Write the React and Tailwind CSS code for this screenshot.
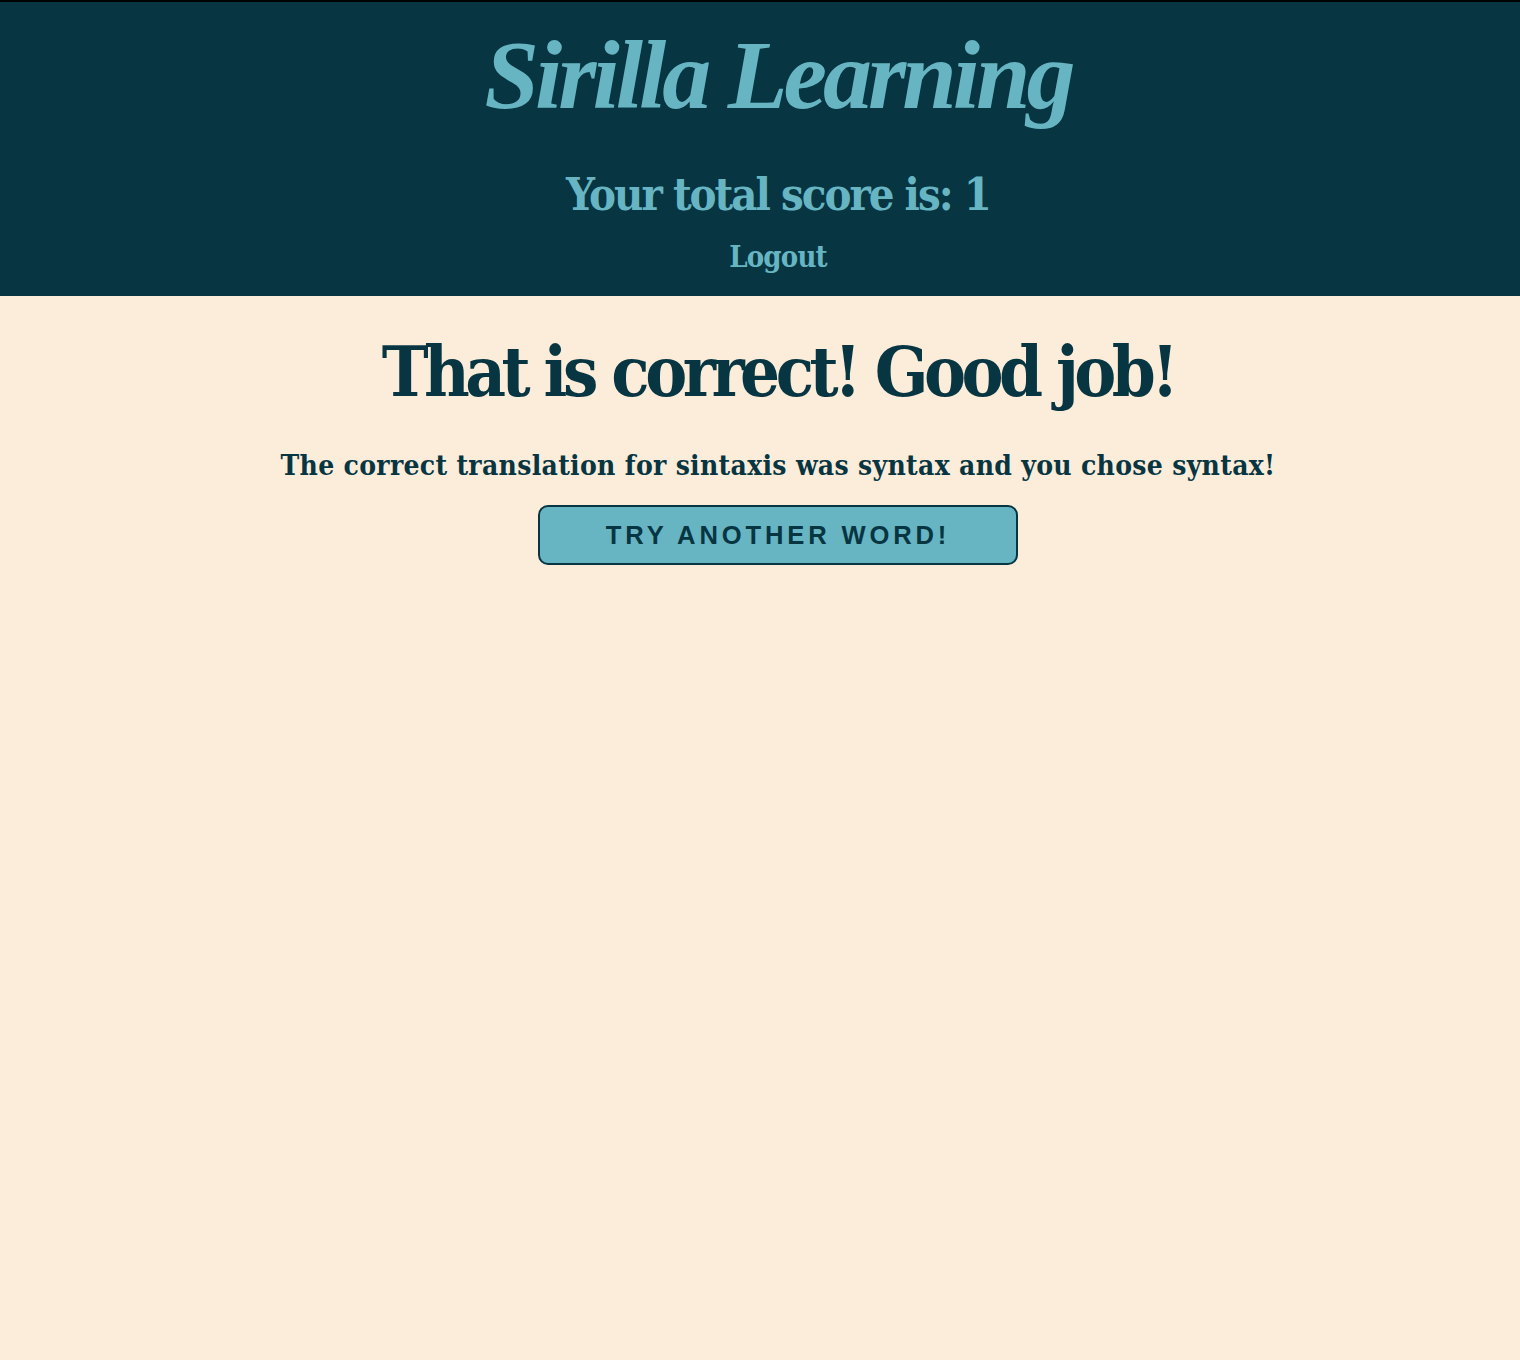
export default function App() {
  const serif = "font-['DejaVu_Serif_Condensed','DejaVu_Serif',serif] [font-stretch:condensed]";
  return (
    <div className="min-h-[1360px] bg-[#fcedda]">
      <header className="border-t-2 border-black bg-[#073642] text-[#67b5c3] pl-[36px] text-center pt-[24px] pb-[24px] flex flex-col items-center">
        <h1 className="font-['Liberation_Serif','Times_New_Roman',serif] italic font-bold text-[98px] leading-none tracking-[-4px]">Sirilla Learning</h1>
        <h2 className={`${serif} font-bold text-[45px] leading-none tracking-[-2px] mt-[48px]`}>Your total score is: 1</h2>
        <a href="#" className={`${serif} font-bold text-[29px] leading-none tracking-[-0.8px] mt-[26px]`}>Logout</a>
      </header>
      <main className="pl-[36px] text-center flex flex-col items-center text-[#073642] pt-[41px]">
        <h1 className={`${serif} font-bold text-[70px] leading-none tracking-[-4.5px]`}>That is correct! Good job!</h1>
        <h3 className={`${serif} font-bold text-[28px] leading-none tracking-[0.3px] mt-[45px]`}>The correct translation for sintaxis was syntax and you chose syntax!</h3>
        <button className="mt-[25px] w-[480px] h-[60px] rounded-[10px] border-2 border-[#073642] bg-[#67b5c3] text-[#073642] font-['Liberation_Sans',Arial,sans-serif] font-bold text-[25.6px] tracking-[3.84px] uppercase">
          Try another word!
        </button>
      </main>
    </div>
  );
}
